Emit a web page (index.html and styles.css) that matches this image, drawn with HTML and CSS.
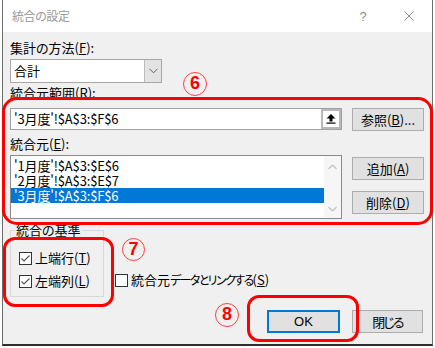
FILE: index.html
```html
<!DOCTYPE html>
<html lang="ja">
<head>
<meta charset="utf-8">
<title>統合の設定</title>
<link rel="stylesheet" href="styles.css">
</head>
<body>
<div class="window">
  <div class="titlebar">
    <div class="title">統合の設定</div>
    <div class="cap cap-help">?</div>
    <div class="cap cap-close">
      <svg width="10" height="10" viewBox="0 0 10 10"><path d="M0.5 0.5L9.5 9.5M9.5 0.5L0.5 9.5" stroke="#8c8c8c" stroke-width="1" fill="none"/></svg>
    </div>
  </div>
  <div class="content">
    <div class="lbl l1">集計の方法(<u>F</u>):</div>
    <div class="combo">
      <span class="combo-text">合計</span>
      <span class="combo-drop">
        <svg width="9" height="6" viewBox="0 0 9 6"><path d="M0.5 0.8L4.5 4.8L8.5 0.8" stroke="#606060" stroke-width="1" fill="none"/></svg>
      </span>
    </div>
    <div class="lbl l2">統合元範囲(<u>R</u>):</div>
    <div class="row r1">
      <div class="refinput">
        <span class="reftext">'3月度'!$A$3:$F$6</span>
        <span class="collapse">
          <svg width="10" height="10" viewBox="0 0 10 10"><path d="M5 0L0.5 4.5H3.5V7.5H6.5V4.5H9.5Z" fill="#000"/><rect x="0.5" y="8.5" width="9" height="1.2" fill="#000"/></svg>
        </span>
      </div>
      <div class="btn">参照(<u>B</u>)...</div>
    </div>
    <div class="lbl l3">統合元(<u>E</u>):</div>
    <div class="row r2">
      <div class="listbox">
        <div class="items">
          <div class="item">'1月度'!$A$3:$E$6</div>
          <div class="item">'2月度'!$A$3:$E$7</div>
          <div class="item sel">'3月度'!$A$3:$F$6</div>
        </div>
        <div class="vscroll">
          <svg width="9" height="6" viewBox="0 0 9 6"><path d="M0.5 5L4.5 1L8.5 5" stroke="#c2c2c2" stroke-width="1.2" fill="none"/></svg>
          <svg width="9" height="6" viewBox="0 0 9 6"><path d="M0.5 1L4.5 5L8.5 1" stroke="#c2c2c2" stroke-width="1.2" fill="none"/></svg>
        </div>
      </div>
      <div class="btncol">
        <div class="btn">追加(<u>A</u>)</div>
        <div class="btn">削除(<u>D</u>)</div>
      </div>
    </div>
    <div class="bottom">
      <fieldset class="group">
        <legend>統合の基準</legend>
        <div class="chk chk1">
          <svg class="box" width="13" height="13" viewBox="0 0 13 13"><rect x="0.5" y="0.5" width="12" height="12" fill="#fff" stroke="#333"/><path d="M2.5 6.5L5 9L10.5 3.5" stroke="#555" stroke-width="1.1" fill="none"/></svg>
          <span>上端行(<u>T</u>)</span>
        </div>
        <div class="chk chk2">
          <svg class="box" width="13" height="13" viewBox="0 0 13 13"><rect x="0.5" y="0.5" width="12" height="12" fill="#fff" stroke="#333"/><path d="M2.5 6.5L5 9L10.5 3.5" stroke="#555" stroke-width="1.1" fill="none"/></svg>
          <span>左端列(<u>L</u>)</span>
        </div>
      </fieldset>
      <div class="chk link">
        <svg class="box" width="13" height="13" viewBox="0 0 13 13"><rect x="0.5" y="0.5" width="12" height="12" fill="#fff" stroke="#333"/></svg>
        <span>統合元<span class="kana">データとリンクする</span>(<u>S</u>)</span>
      </div>
    </div>
    <div class="actions">
      <div class="btn btn-ok">OK</div>
      <div class="btn btn-close"><span class="tight">閉じる</span></div>
    </div>
  </div>

  <div class="mark mark6"></div>
  <div class="mark mark7"></div>
  <div class="mark mark8"></div>
  <div class="badge badge6">6</div>
  <div class="badge badge7">7</div>
  <div class="badge badge8">8</div>
</div>
</body>
</html>
```

FILE: styles.css
```css
* { box-sizing: border-box; }
html, body { margin: 0; padding: 0; background: #fff; }
body {
  font-family: "Noto Sans CJK JP", "Noto Sans", sans-serif;
  font-size: 13px;
  font-feature-settings: "palt";
  color: #000;
}
u { text-decoration: underline; text-underline-offset: 1px; }

.window {
  position: relative;
  margin-left: 2px;
  width: 431px;
  height: 346px;
  border-left: 1px solid #6c6c6c;
  border-right: 1px solid #6c6c6c;
  border-bottom: 2px solid #2e2e2e;
  background: #f0f0f0;
  display: flex;
  flex-direction: column;
}

.titlebar {
  flex: none;
  height: 32px;
  background: #fff;
  display: flex;
  align-items: center;
}
.title {
  flex: 1;
  padding-left: 9px;
  color: #9a9a9a;
  font-size: 12px;
  line-height: 16px;
  letter-spacing: -0.4px;
}
.cap {
  width: 46px;
  height: 32px;
  display: flex;
  align-items: center;
  justify-content: center;
  color: #8c8c8c;
  font-family: "Liberation Sans", sans-serif;
  font-size: 13px;
}

.content {
  flex: 1;
  padding: 0 8px 0 7px;
}

.lbl { height: 16px; line-height: 16px; white-space: nowrap; }
.l1 { margin-top: 8px; }
.l2 { margin-top: 2px; }
.l3 { margin-top: 5px; }

.combo {
  margin-top: 3px;
  width: 152px;
  height: 24px;
  border: 1px solid #a8a8a8;
  background: #fff;
  display: flex;
}
.combo-text { flex: 1; padding-left: 3px; line-height: 22px; }
.combo-drop {
  width: 17px;
  background: #e3e3e3;
  border-left: 1px solid #bcbcbc;
  display: flex;
  align-items: center;
  justify-content: center;
}

.row {
  display: grid;
  grid-template-columns: 332px 72px;
  column-gap: 10px;
  align-items: start;
}
.r1 { margin-top: 7px; }
.r2 { margin-top: 3px; }

.refinput {
  height: 22px;
  border: 1px solid #a0a0a0;
  background: #fff;
  display: flex;
}
.reftext { flex: 1; padding-left: 3px; line-height: 20px; white-space: nowrap; letter-spacing: -0.15px; }
.collapse {
  width: 20px;
  border: 2px solid #b8b8b8;
  background: #fff;
  display: flex;
  align-items: center;
  justify-content: center;
}

.btn {
  height: 23px;
  border: 1px solid #adadad;
  background: #e1e1e1;
  display: flex;
  align-items: center;
  justify-content: center;
  line-height: 16px;
  white-space: nowrap;
}

.listbox {
  height: 64px;
  border: 1px solid #8a8a8a;
  background: #fff;
  display: flex;
}
.items { flex: 1; padding-top: 2px; }
.item { height: 15px; line-height: 15px; padding-left: 3px; white-space: nowrap; letter-spacing: -0.15px; }
.sel { background: #0078d7; color: #fff; }
.vscroll {
  width: 17px;
  background: #f6f6f6;
  display: flex;
  flex-direction: column;
  justify-content: space-between;
  align-items: center;
  padding: 8px 0 6px;
}

.btncol {
  display: flex;
  flex-direction: column;
  gap: 11px;
  padding-top: 2px;
}

.bottom {
  margin-top: 3px;
  display: flex;
  align-items: flex-start;
}
.group {
  margin: 0;
  width: 94px;
  height: 75px;
  padding: 0 0 0 4px;
  border: 1px solid #d8d8d8;
}
.group legend {
  padding: 0 1px;
  line-height: 16px;
  height: 16px;
}
.chk {
  display: flex;
  align-items: center;
  gap: 3px;
  height: 16px;
  line-height: 16px;
  white-space: nowrap;
}
.chk .box { flex: none; }
.chk1 { margin-top: 12px; margin-left: 4px; }
.chk2 { margin-top: 7px; margin-left: 4px; }
.link { margin-left: 11px; margin-top: 50px; }
.kana { font-size: 12px; letter-spacing: -1.6px; }
.tight { letter-spacing: -1.8px; }

.actions {
  margin-top: 13px;
  display: flex;
  justify-content: flex-end;
  gap: 12px;
  padding-right: 1px;
}
.btn-ok {
  width: 73px;
  border: 1px solid #0078d7;
  box-shadow: inset 0 0 0 1px #0078d7;
  font-family: "Liberation Sans", sans-serif;
}
.btn-close { width: 71px; }

/* annotation overlays */
.mark {
  position: absolute;
  border: 3px solid #ff0000;
}
.mark6 { left: -1px; top: 97px; width: 431px; height: 128px; border-radius: 15px; }
.mark7 { left: 0; top: 237px; width: 111px; height: 70px; border-radius: 12px; }
.mark8 { left: 244px; top: 295px; width: 112px; height: 47px; border-radius: 12px; }

.badge {
  position: absolute;
  width: 24px;
  height: 24px;
  border: 1.5px solid #ff4040;
  border-radius: 50%;
  color: #ff0000;
  font-family: "Liberation Sans", sans-serif;
  font-weight: bold;
  font-size: 18px;
  line-height: 21px;
  text-align: center;
}
.badge6 { left: 180px; top: 72px; }
.badge7 { left: 119px; top: 238px; width: 23px; height: 23px; line-height: 20px; }
.badge8 { left: 212px; top: 303px; }
```
